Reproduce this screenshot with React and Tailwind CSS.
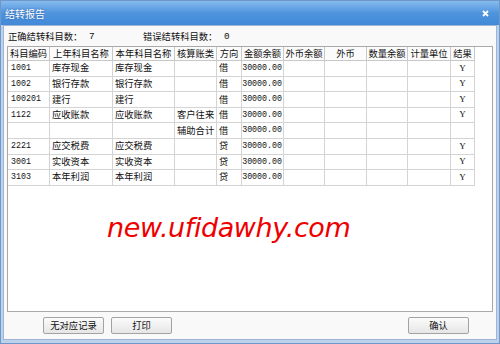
import React from "react";

const cols = [42, 63, 62, 42, 25, 42, 41, 42, 41, 43, 24];
const headers = ["科目编码", "上年科目名称", "本年科目名称", "核算账类", "方向", "金额余额", "外币余额", "外币", "数量余额", "计量单位", "结果"];
const rows = [
  ["1001", "库存现金", "库存现金", "", "借", "30000.00", "", "", "", "", "Y"],
  ["1002", "银行存款", "银行存款", "", "借", "30000.00", "", "", "", "", "Y"],
  ["100201", "建行", "建行", "", "借", "30000.00", "", "", "", "", "Y"],
  ["1122", "应收账款", "应收账款", "客户往来", "借", "30000.00", "", "", "", "", "Y"],
  ["", "", "", "辅助合计", "借", "30000.00", "", "", "", "", ""],
  ["2221", "应交税费", "应交税费", "", "贷", "30000.00", "", "", "", "", "Y"],
  ["3001", "实收资本", "实收资本", "", "贷", "30000.00", "", "", "", "", "Y"],
  ["3103", "本年利润", "本年利润", "", "贷", "30000.00", "", "", "", "", "Y"],
];

const cjk = { fontFamily: '"Noto Sans CJK SC", sans-serif' };
const mono = { fontFamily: '"Liberation Mono", monospace' };

function Cell({ w, i, v }) {
  let cls = "h-full shrink-0 border-r border-[#d4d4d4] flex items-center overflow-hidden whitespace-nowrap ";
  let style = cjk;
  if (i === 0) { style = mono; cls += "pl-[3px] text-[8.3px]"; }
  else if (i === 5) { style = mono; cls += "justify-end pr-[1px] text-[8.3px]"; }
  else if (i === 10) { style = { fontFamily: '"Liberation Serif", serif' }; cls += "justify-center text-[9px]"; }
  else { cls += "pl-[2px] text-[9.3px]"; }
  return (
    <div className={cls} style={{ width: w, ...style }}>
      {v}
    </div>
  );
}

function Button({ children }) {
  return (
    <div
      className="w-[61px] h-[17px] flex items-center justify-center rounded-[2px] border border-[#a3a3a3] bg-gradient-to-b from-[#fbfbfb] to-[#e6e6e6] text-[9.3px] text-[#111]"
      style={cjk}
    >
      {children}
    </div>
  );
}

export default function App() {
  return (
    <div className="w-[500px] h-[344px] flex flex-col bg-[#bcd2ec] border border-[#6f98c8] text-[#111]" style={cjk}>
      <div className="h-[24px] shrink-0 flex items-center justify-between pl-[4px] pr-[10px] bg-gradient-to-b from-[#86bbee] via-[#4f94dd] to-[#4189d8]">
        <span className="text-[10px] text-white" style={{ ...cjk, textShadow: "0 0 2px rgba(30,60,120,0.6)" }}>结转报告</span>
        <svg width="7" height="7" viewBox="0 0 7 7">
          <path d="M1 1L6 6M6 1L1 6" stroke="#ffffff" strokeWidth="1.8" />
        </svg>
      </div>
      <div className="flex-1 mx-[2px] mb-[3px] bg-[#f9f9f9] border border-[#9fb6d2] flex flex-col">
        <div className="h-[20px] shrink-0 flex items-center pl-[4px] text-[9.3px] pt-[1px]">
          <span className="w-[81px]">正确结转科目数：</span>
          <span className="w-[54px]" style={mono}>7</span>
          <span className="w-[81px]">错误结转科目数：</span>
          <span style={mono}>0</span>
        </div>
        <div className="h-[266px] shrink-0 mx-[3px] bg-white border border-[#a9a9a9] flex flex-col">
          <div className="h-[14px] flex border-b border-[#c8c8c8] w-[467px] bg-[#fbfbfb]">
            {headers.map((h, i) => (
              <div
                key={i}
                className="h-full shrink-0 border-r border-[#c8c8c8] flex items-center justify-center overflow-hidden whitespace-nowrap text-[9.3px]"
                style={{ width: cols[i], ...cjk }}
              >
                {h}
              </div>
            ))}
          </div>
          {rows.map((r, ri) => (
            <div key={ri} className="h-[15.6px] flex border-b border-[#d4d4d4] w-[467px]">
              {r.map((v, i) => (
                <Cell key={i} w={cols[i]} i={i} v={v} />
              ))}
            </div>
          ))}
          <div className="pl-[99px] mt-[28px]">
            <span
              className="text-[27px] text-[#ee0000] italic leading-none tracking-[-0.4px]"
              style={{ fontFamily: '"DejaVu Sans", sans-serif' }}
            >
              new.ufidawhy.com
            </span>
          </div>
        </div>
        <div className="flex-1 flex items-center pl-[39px] pr-[27px]">
          <Button>无对应记录</Button>
          <div className="w-[7px]" />
          <Button>打印</Button>
          <div className="flex-1" />
          <Button>确认</Button>
        </div>
      </div>
    </div>
  );
}
